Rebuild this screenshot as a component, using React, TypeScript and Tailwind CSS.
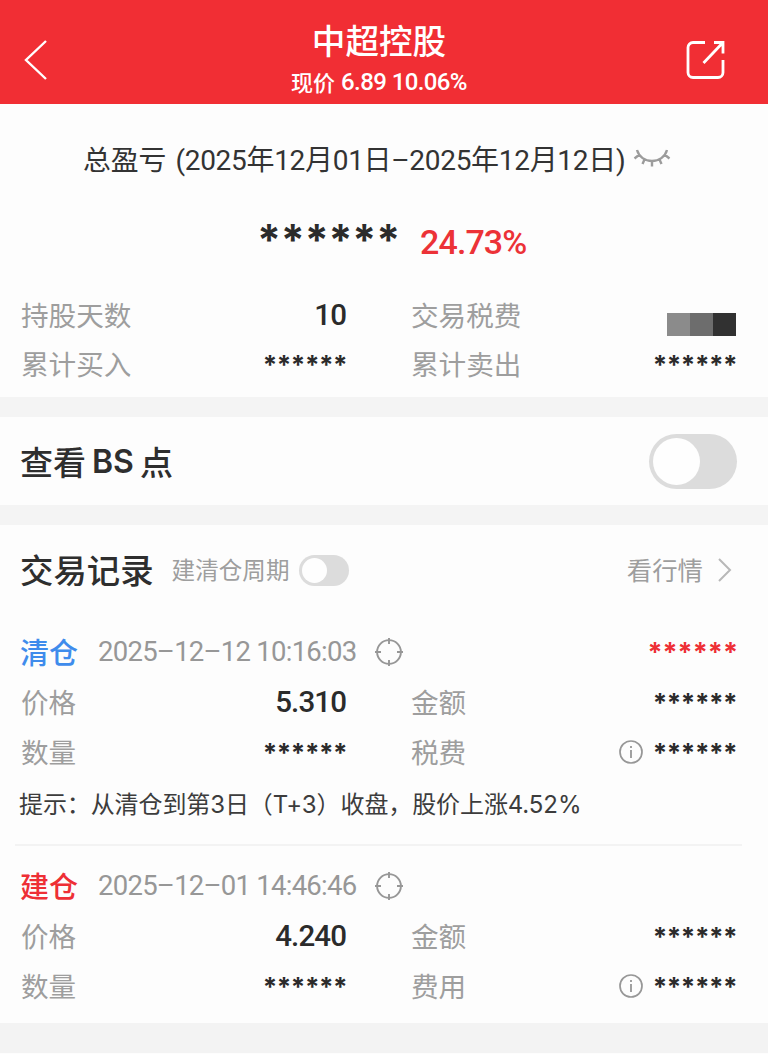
const cjk = "font-['Noto_Sans_CJK_SC',sans-serif]";
const num = "font-[Roboto,'Noto_Sans_CJK_SC',sans-serif]";

interface TradeRecord {
  kind: string;
  kindClass: string;
  time: string;
  price: string;
  feeLabel: string;
  profit?: boolean;
  tip?: string;
}

const records: TradeRecord[] = [
  {
    kind: "清仓",
    kindClass: "text-[#3f8cec]",
    time: "2025–12–12 10:16:03",
    price: "5.310",
    feeLabel: "税费",
    profit: true,
    tip: "提示：从清仓到第3日（T+3）收盘，股价上涨4.52%",
  },
  {
    kind: "建仓",
    kindClass: "text-[#ee2f35]",
    time: "2025–12–01 14:46:46",
    price: "4.240",
    feeLabel: "费用",
  },
];

const Stars = ({
  size = "text-[26px] tracking-[-0.5px] -mr-px",
  className = "text-[#2b2b2b]",
}: {
  size?: string;
  className?: string;
}) => (
  <span
    className={`font-['Inter',sans-serif] leading-[50px] h-[48px] font-bold ${size} ${className}`}
  >
    ******
  </span>
);

const Label = ({ children }: { children: string }) => (
  <span className={`${cjk} -mt-px text-[27.6px] text-[#9e9e9e]`}>
    {children}
  </span>
);

const Value = ({ children }: { children: string }) => (
  <span
    className={`${num} text-[29.5px] font-medium tracking-[-0.9px] text-[#2b2b2b]`}
  >
    {children}
  </span>
);

const Target = () => (
  <svg
    width="30"
    height="30"
    viewBox="0 0 30 30"
    fill="none"
    stroke="#979797"
    strokeWidth="1.9"
  >
    <circle cx="15" cy="15" r="11.9" />
    <path d="M15 1v6M15 23v6M1 15h6M23 15h6" />
  </svg>
);

const Info = () => (
  <svg
    width="24"
    height="24"
    viewBox="0 0 24 24"
    fill="none"
    stroke="#979797"
    strokeWidth="1.7"
  >
    <circle cx="12" cy="12" r="11" />
    <path d="M12 10v8M12 6v2" strokeWidth="1.8" />
  </svg>
);

const Record = ({ record }: { record: TradeRecord }) => (
  <div>
    <div className="flex items-center h-[50px] pl-[20px] pr-[30px]">
      <span
        className={`${cjk} -mt-px text-[29px] font-medium ${record.kindClass}`}
      >
        {record.kind}
      </span>
      <span
        className={`${num} ml-[20px] w-[276px] text-[27.5px] tracking-[-0.75px] text-[#979797]`}
      >
        {record.time}
      </span>
      <Target />
      {record.profit && (
        <div className="ml-auto flex">
          <Stars
            size="text-[27px] tracking-[0px]"
            className="text-[#ee2f35]"
          />
        </div>
      )}
    </div>
    <div className="grid grid-cols-[325px_325px] gap-x-[65px] pl-[21px]">
      <div className="flex items-center justify-between h-[50px]">
        <Label>价格</Label>
        <Value>{record.price}</Value>
      </div>
      <div className="flex items-center justify-between h-[50px]">
        <Label>金额</Label>
        <Stars />
      </div>
      <div className="flex items-center justify-between h-[50px]">
        <Label>数量</Label>
        <Stars />
      </div>
      <div className="flex items-center justify-between h-[50px]">
        <Label>{record.feeLabel}</Label>
        <div className="flex items-center gap-[10px]">
          <Info />
          <Stars />
        </div>
      </div>
    </div>
    {record.tip && (
      <p className="h-[67px] pl-[19px] pt-[9px] font-['Inter','Noto_Sans_CJK_SC',sans-serif] text-[24px] leading-[38px] tracking-[-0.1px] text-[#3c3c3c] whitespace-nowrap">
        {record.tip}
      </p>
    )}
  </div>
);

export default function App() {
  return (
    <div className="w-[768px] h-[1054px] flex flex-col bg-[#fdfdfd] overflow-hidden">
      <header className="h-[104px] flex items-center justify-between bg-[#f12e34] text-white shrink-0">
        <div className="w-[84px] pl-6 pt-4">
          <svg
            width="24"
            height="42"
            viewBox="0 0 24 42"
            fill="none"
            stroke="currentColor"
            strokeWidth="2.4"
          >
            <path d="M22 2L2 21L22 40" />
          </svg>
        </div>
        <div className="flex flex-col items-center pt-[13px] pr-[10px]">
          <h1
            className={`${cjk} text-[33.6px] leading-[46px] font-medium`}
          >
            中超控股
          </h1>
          <div className="flex items-center h-[37px] text-[24px] font-medium">
            <span className={`${cjk} text-[22px]`}>现价</span>
            <span className={`${num} ml-[6px] tracking-[-0.6px]`}>
              6.89 10.06%
            </span>
          </div>
        </div>
        <div className="w-[84px] pl-px pt-4">
          <svg
            width="40"
            height="40"
            viewBox="0 0 40 40"
            fill="none"
            stroke="currentColor"
            strokeWidth="2.8"
          >
            <path d="M20 2.5H8a5 5 0 0 0-5 5v25a5 5 0 0 0 5 5h25a5 5 0 0 0 5-5V20" />
            <path d="M29 2.5h9v11M38 2.5L18.500 23" />
          </svg>
        </div>
      </header>

      <section className="h-[293px] shrink-0">
        <div className="flex items-center h-[112px] pl-[83px] text-[#333]">
          <span
            className={`${cjk} text-[27.8px] w-[541px] whitespace-nowrap`}
          >
            总盈亏
            <span className={`${num} ml-[9px] text-[28px] tracking-[-0.3px]`}>
              (2025年12月01日–2025年12月12日)
            </span>
          </span>
          <svg
            className="ml-[9px] -mt-1"
            width="38"
            height="20"
            viewBox="0 0 38 20"
            fill="none"
            stroke="#9c9c9c"
            strokeWidth="2.4"
          >
            <path d="M4 2C6 9 12 13 19 13S32 9 34 2M1.500 10.500L6.500 6.500M11.500 11.500l-2 4.500M19 13v5.500M26.500 11.500l2 4.500M36.500 10.500L31.500 6.500" />
          </svg>
        </div>
        <div className="flex items-center h-[50px] pl-[257px]">
          <div className="flex -mt-[6px]">
            <Stars size="text-[43px] tracking-[-0.2px]" />
          </div>
          <span
            className={`${num} ml-[20px] pt-[3px] text-[34px] font-medium tracking-[-0.9px] text-[#ec3237]`}
          >
            24.73%
          </span>
        </div>
        <div className="grid grid-cols-[325px_325px] gap-x-[65px] pl-[21px] pt-[25px]">
          <div className="flex items-center justify-between h-[49px]">
            <Label>持股天数</Label>
            <Value>10</Value>
          </div>
          <div className="flex items-center justify-between h-[49px]">
            <Label>交易税费</Label>
            <div className="flex mt-[17px] h-[23px] w-[69px]">
              <i className="flex-1 bg-[#8b8b8b]" />
              <i className="flex-1 bg-[#6d6d6d]" />
              <i className="flex-1 bg-[#313131]" />
            </div>
          </div>
          <div className="flex items-center justify-between h-[48px]">
            <Label>累计买入</Label>
            <Stars />
          </div>
          <div className="flex items-center justify-between h-[48px]">
            <Label>累计卖出</Label>
            <Stars />
          </div>
        </div>
      </section>

      <section className="h-[128px] shrink-0 flex items-center justify-between border-y-[20px] border-[#f4f4f4] pl-[20px] pr-[31px] text-[#2e2e2e]">
        <h2
          className={`${cjk} flex items-center pt-px text-[33px] font-medium`}
        >
          查看
          <span className="mx-[6px] font-['Inter',sans-serif] text-[32px] font-semibold">
            BS
          </span>
          点
        </h2>
        <div className="w-[88px] h-[55px] rounded-full bg-[#dcdcdc] p-1">
          <div className="size-[47px] rounded-full bg-[#fefefe]" />
        </div>
      </section>

      <section className="h-[498px] shrink-0">
        <div className="flex items-center h-[90px] pl-[20px] pr-9">
          <h2
            className={`${cjk} -mt-[2px] text-[33.4px] font-medium text-[#2e2e2e]`}
          >
            交易记录
          </h2>
          <span className={`${cjk} ml-[18px] text-[23.6px] text-[#9e9e9e]`}>
            建清仓周期
          </span>
          <div className="ml-[9px] w-[50px] h-[31px] rounded-full bg-[#dcdcdc] p-[3px]">
            <div className="size-[25px] rounded-full bg-[#fefefe]" />
          </div>
          <span
            className={`${cjk} ml-auto -mt-[2px] text-[25.4px] text-[#9e9e9e]`}
          >
            看行情
          </span>
          <svg
            className="ml-[15px]"
            width="14"
            height="26"
            viewBox="0 0 14 26"
            fill="none"
            stroke="#b8b8b8"
            strokeWidth="2"
          >
            <path d="M1 2L12 13L1 24" />
          </svg>
        </div>
        <div className="pt-3">
          <Record record={records[0]} />
        </div>
        <div className="ml-[15px] mr-[26px] border-t-2 border-[#f3f3f3]" />
        <div className="pt-[15px]">
          <Record record={records[1]} />
        </div>
      </section>

      <footer className="h-[30px] shrink-0 bg-[#f3f3f3]" />
    </div>
  );
}
